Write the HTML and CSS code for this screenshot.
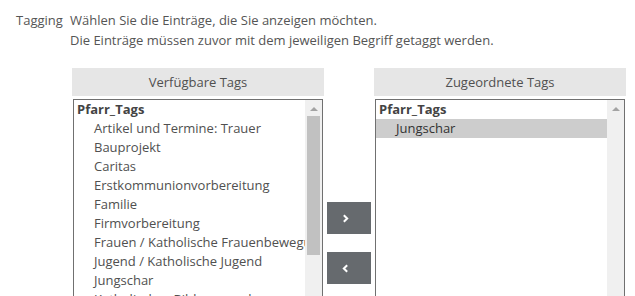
FILE: index.html
```html
<!DOCTYPE html>
<html>

<head>
    <title>Tagging</title>
    <meta charset="utf-8" />
    <link rel="stylesheet" href="styles.css">
</head>

<body>

    <div class="field">
        <div class="fieldLabel">Tagging</div>
        <div class="fieldHelp">
            Wählen Sie die Einträge, die Sie anzeigen möchten.<br>
            Die Einträge müssen zuvor mit dem jeweiligen Begriff getaggt werden.
        </div>
    </div>

    <div class="picker">
        <div class="pickerCol">
            <div class="pickerHead">Verfügbare Tags</div>
            <div class="pickerBox">
                <div class="pickerList">
                    <div class="group">Pfarr_Tags</div>
                    <div class="item">Artikel und Termine: Trauer</div>
                    <div class="item">Bauprojekt</div>
                    <div class="item">Caritas</div>
                    <div class="item">Erstkommunionvorbereitung</div>
                    <div class="item">Familie</div>
                    <div class="item">Firmvorbereitung</div>
                    <div class="item">Frauen / Katholische Frauenbewegung</div>
                    <div class="item">Jugend / Katholische Jugend</div>
                    <div class="item">Jungschar</div>
                    <div class="item">Katholisches Bildungswerk</div>
                    <div class="item">Kinder</div>
                </div>
                <div class="scrollbar">
                    <div class="arrowUp"></div>
                    <div class="thumb"></div>
                </div>
            </div>
        </div>

        <div class="pickerButtons">
            <button class="moveBtn" type="button">
                <svg width="8" height="9" viewBox="0 0 8 9"><path d="M1.8 1.2 L5.2 4.5 L1.8 7.8" fill="none" stroke="#fff" stroke-width="2"/></svg>
            </button>
            <button class="moveBtn" type="button">
                <svg width="8" height="9" viewBox="0 0 8 9"><path d="M5.2 1.2 L1.8 4.5 L5.2 7.8" fill="none" stroke="#fff" stroke-width="2"/></svg>
            </button>
        </div>

        <div class="pickerCol">
            <div class="pickerHead">Zugeordnete Tags</div>
            <div class="pickerBox">
                <div class="pickerList">
                    <div class="group">Pfarr_Tags</div>
                    <div class="item selected">Jungschar</div>
                </div>
                <div class="scrollbar">
                    <div class="arrowUp"></div>
                </div>
            </div>
        </div>
    </div>

</body>

</html>
```

FILE: styles.css
```css
body {
    margin: 0;
    background-color: #fff;
    font-family: "Open Sans", "Liberation Sans", sans-serif;
    font-size: 13px;
    color: #555;
}

div.field {
    display: flex;
    padding: 10px 0 0 16px;
    line-height: 20px;
}

div.fieldLabel {
    width: 54px;
}

div.pickerList,
div.pickerHead {
    color: #505050;
}

div.picker {
    display: flex;
    margin: 18px 0 0 72px;
}

div.pickerCol {
    width: 252px;
}

div.pickerHead {
    height: 28px;
    line-height: 28px;
    text-align: center;
    background-color: #e6e6e6;
}

div.pickerBox {
    display: flex;
    margin: 3px 1px 0 1px;
    height: 220px;
    border: 1px solid #707070;
    border-bottom: none;
}

div.pickerList {
    flex: 1;
    overflow: hidden;
    line-height: 19px;
    white-space: nowrap;
}

div.group {
    padding-left: 3px;
    font-weight: bold;
    color: #444;
}

div.item {
    padding-left: 20px;
}

div.item.selected {
    background-color: #cdcdcd;
    color: #333;
}

div.scrollbar {
    width: 17px;
    background-color: #f0f0f0;
    display: flex;
    flex-direction: column;
    align-items: center;
}

div.arrowUp {
    margin: 7px 0 5px 0;
    width: 0;
    height: 0;
    border-left: 4px solid transparent;
    border-right: 4px solid transparent;
    border-bottom: 4px solid #a3a3a3;
}

div.thumb {
    width: 13px;
    height: 139px;
    background-color: #c1c1c1;
}

div.pickerButtons {
    width: 50px;
    padding-top: 134px;
    display: flex;
    flex-direction: column;
    align-items: center;
    gap: 18px;
}

button.moveBtn {
    width: 44px;
    height: 32px;
    border: none;
    padding: 0 7px 0 0;
    background-color: #666a6e;
    display: flex;
    align-items: center;
    justify-content: center;
}
```
